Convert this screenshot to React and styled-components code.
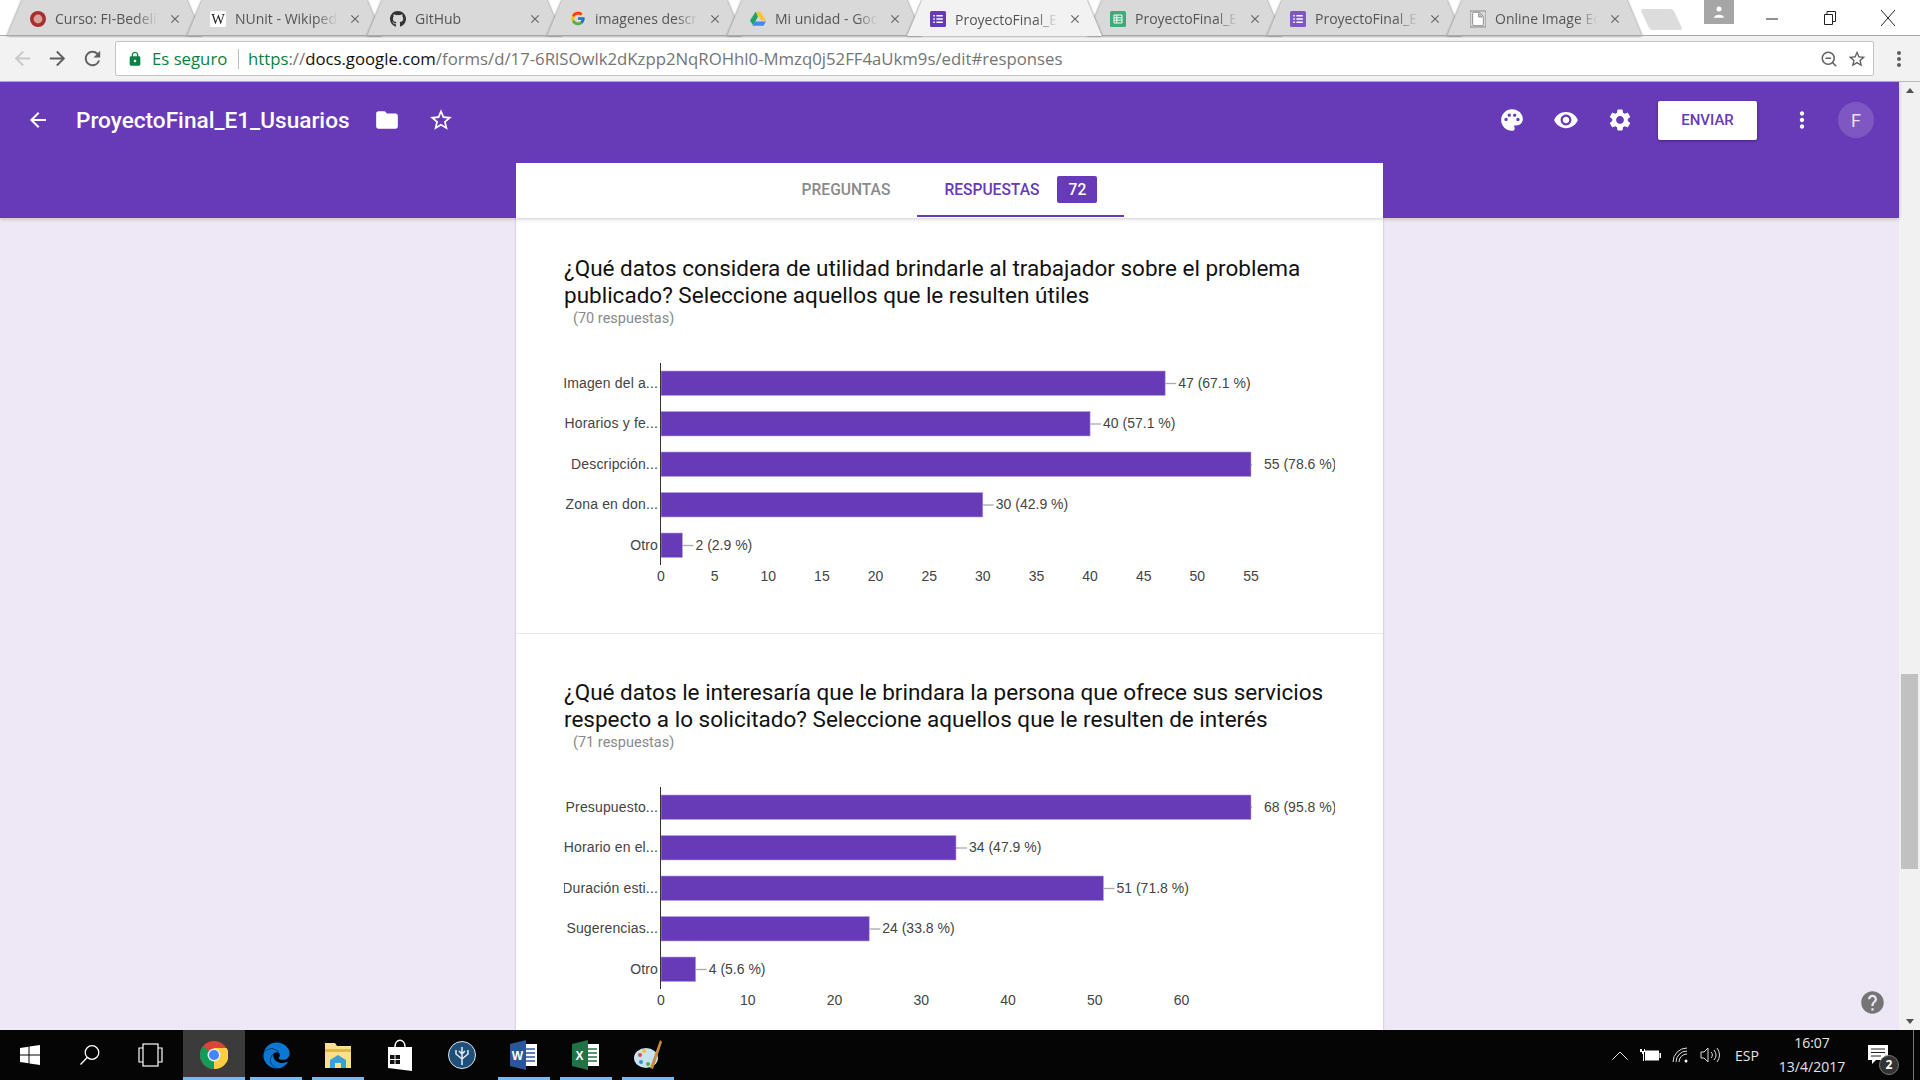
import React from 'react';
import styled, { createGlobalStyle } from 'styled-components';
import { FaGithub, FaEdge } from 'react-icons/fa';
import { FcGoogle } from 'react-icons/fc';
import {
  MdArrowBack, MdArrowForward, MdRefresh, MdLock, MdFolder, MdStarBorder, MdPalette,
  MdRemoveRedEye, MdSettings, MdMoreVert, MdHelp, MdClose, MdInsertDriveFile,
} from 'react-icons/md';
import { ZoomOut } from 'lucide-react';

const PURPLE = '#673ab7';

const GlobalStyle = createGlobalStyle`
  html, body { margin: 0; padding: 0; height: 100%; overflow: hidden; background: #fff; }
  #root { height: 100%; }
  * { box-sizing: border-box; }
`;

const Screen = styled.div`
  width: 1920px;
  height: 1080px;
  display: flex;
  flex-direction: column;
  overflow: hidden;
  font-family: Roboto, sans-serif;
`;

/* chrome tabs */
const TabStrip = styled.div`
  height: 35px;
  flex: none;
  display: flex;
  padding-left: 7px;
  background: #fff;
`;

const TabShadow = styled.div`
  width: 195px;
  height: 36px;
  flex: none;
  margin-right: -15px;
  position: relative;
  z-index: ${props => (props.$active ? 2 : 1)};
  filter: drop-shadow(0 0 0.8px #666);
`;

const TabBody = styled.div`
  height: 36px;
  display: flex;
  align-items: center;
  padding: 2px 20px 0 23px;
  clip-path: polygon(0 100%, 15px 0, 180px 0, 100% 100%);
  background: ${props => (props.$active ? '#f2f2f2' : '#d9d9d9')};
  border-bottom: ${props => (props.$active ? 'none' : '1px solid #a9a9a9')};
`;

const TabIcon = styled.span`
  width: 16px;
  height: 16px;
  flex: none;
  display: flex;
  align-items: center;
  justify-content: center;
`;

const TabTitle = styled.span`
  flex: 1;
  min-width: 0;
  margin-left: 9px;
  font: 14px "Open Sans", sans-serif;
  color: #555;
  white-space: nowrap;
  overflow: hidden;
  -webkit-mask-image: linear-gradient(to right, #000 76%, transparent 96%);
  mask-image: linear-gradient(to right, #000 76%, transparent 96%);
`;

const TabClose = styled(MdClose)`
  flex: none;
  width: 14px;
  height: 14px;
  margin-left: 6px;
  color: #666;
`;

const NewTab = styled.div`
  width: 33px;
  height: 21px;
  margin: 9px 0 0 18px;
  flex: none;
  background: #dcdcdc;
  border-radius: 3px;
  transform: skewX(25deg);
`;

const Profile = styled.div`
  width: 30px;
  height: 24px;
  margin-left: 26px;
  flex: none;
  background: #a6a6a6;
  display: flex;
  align-items: center;
  justify-content: center;
`;

const WindowControls = styled.div`
  margin-left: auto;
  display: flex;
  padding-right: 3px;
`;

const WindowButton = styled.div`
  width: 58px;
  height: 35px;
  display: flex;
  align-items: center;
  justify-content: center;
`;

/* url bar */
const Toolbar = styled.div`
  height: 47px;
  flex: none;
  display: flex;
  align-items: center;
  padding-left: 5px;
  background: #f2f2f2;
  border-top: 1px solid #a9a9a9;
  border-bottom: 1px solid #b8b8b8;
`;

const NavButton = styled.div`
  width: 35px;
  display: flex;
  justify-content: center;
  color: ${props => (props.$off ? '#c9c9c9' : '#5f5f5f')};
  font-size: 23px;
`;

const Omnibox = styled.div`
  width: 1759px;
  height: 35px;
  margin-left: 5px;
  display: flex;
  align-items: center;
  padding: 0 6px 0 11px;
  background: #fff;
  border: 1px solid #c4c4c4;
  border-radius: 2px;
  font: 16.75px "Open Sans", sans-serif;
  white-space: nowrap;
`;

const Secure = styled.span`
  margin-left: 9px;
  color: #0b8043;
  width: 74px;
`;

const Divider = styled.span`
  width: 1px;
  height: 20px;
  margin: 0 9px 0 12px;
  background: #bdbdbd;
`;

const UrlPart = styled.span`
  color: ${props => props.$color};
`;

const OmniIcons = styled.div`
  margin-left: auto;
  display: flex;
  align-items: center;
  gap: 9px;
  color: #5f5f5f;
`;

const MenuDots = styled.div`
  margin-left: 13px;
  display: flex;
  color: #5f5f5f;
  font-size: 24px;
`;

/* page */
const Main = styled.div`
  flex: 1;
  min-height: 0;
  display: flex;
`;

const Page = styled.div`
  flex: 1;
  min-width: 0;
  display: flex;
  flex-direction: column;
  position: relative;
  background: #ede7f6;
`;

const Header = styled.header`
  height: 136px;
  flex: none;
  background: ${PURPLE};
  position: relative;
  z-index: 2;
  box-shadow: 0 1px 4px rgba(0, 0, 0, 0.2);
`;

const HeaderRow = styled.div`
  height: 76px;
  margin-bottom: 5px;
  display: flex;
  align-items: center;
  padding-left: 26px;
  color: #fff;
`;

const HeaderTitle = styled.h1`
  margin: 0 10px 0 26px;
  font: 500 22.6px Roboto, sans-serif;
`;

const HeaderIcon = styled.div`
  width: 54px;
  display: flex;
  justify-content: center;
  font-size: 26px;
`;

const HeaderRight = styled.div`
  margin-left: auto;
  display: flex;
  align-items: center;
  padding-right: 25px;
`;

const SendButton = styled.div`
  width: 99px;
  height: 39px;
  margin: 0 18px 0 11px;
  display: flex;
  align-items: center;
  justify-content: center;
  background: #fff;
  color: ${PURPLE};
  font-weight: 500;
  font-size: 15px;
  border-radius: 2px;
  box-shadow: 0 1px 3px rgba(0, 0, 0, 0.35);
`;

const Avatar = styled.div`
  width: 36px;
  height: 36px;
  margin-left: 9px;
  border-radius: 50%;
  background: #7e57c2;
  color: #e8e0f5;
  display: flex;
  align-items: center;
  justify-content: center;
  font-size: 18px;
`;

const TabsCard = styled.div`
  width: 867px;
  height: 55px;
  margin: 0 auto;
  background: #fff;
  display: flex;
  justify-content: center;
`;

const FormTab = styled.div`
  height: 54px;
  display: flex;
  align-items: center;
  padding: 1px 27px 0;
  font-size: 15.6px;
  font-weight: 500;
  color: ${props => (props.$active ? PURPLE : '#8a8a8a')};
  border-bottom: 2px solid ${props => (props.$active ? PURPLE : 'transparent')};
`;

const CountBadge = styled.span`
  width: 40px;
  height: 27px;
  margin-left: 18px;
  display: flex;
  align-items: center;
  justify-content: center;
  background: ${PURPLE};
  color: #fff;
  border-radius: 2px;
`;

const Body = styled.div`
  flex: 1;
  min-height: 0;
  overflow: hidden;
`;

const Card = styled.div`
  width: 867px;
  margin: 0 auto;
  min-height: 100%;
  background: #fff;
  box-shadow: 0 0 2px rgba(0, 0, 0, 0.25);
`;

const Section = styled.section`
  padding: ${props => props.$top}px 48px 43px;
  border-bottom: 1px solid #e8e8e8;
`;

const Question = styled.h2`
  margin: 0;
  font: 400 22.5px/27px Roboto, sans-serif;
  color: #111;
`;

const AnswerCount = styled.div`
  margin: 2px 0 13px 9px;
  font-size: 14.5px;
  line-height: 16px;
  color: #8a8a8a;
`;

const ChartSvg = styled.svg`
  display: block;
  font-family: "Liberation Sans", Arial, sans-serif;
  font-size: 14px;
  fill: #444;
`;

const BarLabel = styled.text`
  letter-spacing: 0.15px;
  text-anchor: end;
`;

const HelpButton = styled(MdHelp)`
  position: absolute;
  right: 13px;
  bottom: 14px;
  width: 27px;
  height: 27px;
  color: #757575;
`;

const Scrollbar = styled.div`
  width: 21px;
  flex: none;
  display: flex;
  flex-direction: column;
  background: #f1f1f1;
`;

const ScrollArrow = styled.div`
  height: 17px;
  flex: none;
  display: flex;
  align-items: center;
  justify-content: center;
  &::before {
    content: '';
    border-left: 4px solid transparent;
    border-right: 4px solid transparent;
    border-${props => (props.$down ? 'top' : 'bottom')}: 5px solid #505050;
  }
`;

const ScrollTrack = styled.div`
  flex: 1;
  padding: 575px 2px 0 2px;
`;

const ScrollThumb = styled.div`
  height: 195px;
  background: #c1c1c1;
`;

/* taskbar */
const Taskbar = styled.div`
  height: 50px;
  flex: none;
  display: flex;
  align-items: stretch;
  background: #050506;
  color: #e4e4e4;
`;

const SystemButton = styled.div`
  width: 60px;
  display: flex;
  align-items: center;
  justify-content: center;
`;

const TaskGroup = styled.div`
  display: flex;
  margin-left: 3px;
`;

const TaskButton = styled.div`
  width: 62px;
  display: flex;
  align-items: center;
  justify-content: center;
  position: relative;
  background: ${props => (props.$active ? '#3b3b3b' : 'transparent')};
  &::after {
    content: '';
    display: ${props => (props.$open ? 'block' : 'none')};
    position: absolute;
    bottom: 0;
    height: 3px;
    left: ${props => (props.$active ? 0 : 5)}px;
    right: ${props => (props.$active ? 0 : 5)}px;
    background: #76b9ed;
  }
`;

const Tray = styled.div`
  margin-left: auto;
  display: flex;
  align-items: center;
  padding-right: 6px;
  font: 14px "Open Sans", sans-serif;
`;

const TrayIcon = styled.div`
  width: 30px;
  display: flex;
  justify-content: center;
`;

const TrayLang = styled.div`
  width: 44px;
  text-align: center;
`;

const Clock = styled.div`
  width: 80px;
  margin-left: 3px;
  text-align: center;
  line-height: 24px;
`;

const Notify = styled.div`
  width: 55px;
  margin-left: 7px;
  padding-left: 9px;
  height: 100%;
  display: flex;
  align-items: center;
  position: relative;
  border-right: 1px solid #777;
`;

const NotifyBadge = styled.span`
  position: absolute;
  left: 20px;
  top: 25px;
  width: 20px;
  height: 20px;
  border-radius: 50%;
  background: #333;
  border: 1px solid #777;
  color: #fff;
  font: 700 12px/18px "Open Sans", sans-serif;
  text-align: center;
`;

/* drawn favicons and app icons */
const CursoIcon = () => (
  <svg width="20" height="20" viewBox="0 0 20 20">
    <circle cx="10" cy="10" r="10" fill="#a62f2f" />
    <circle cx="10" cy="10" r="5.5" fill="#dca09a" />
  </svg>
);

const WikiIcon = () => (
  <svg width="20" height="20" viewBox="0 0 20 20">
    <rect width="20" height="20" rx="2" fill="#fff" />
    <text x="10" y="16" textAnchor="middle" fontFamily="Liberation Serif, serif" fontSize="18" fill="#222">W</text>
  </svg>
);

const DriveIcon = () => (
  <svg width="20" height="18" viewBox="0 0 20 18">
    <path d="M7 0h6l7 11h-6z" fill="#f7c531" />
    <path d="M7 0l3 6-6 11-4-6z" fill="#1fa463" />
    <path d="M6 12h14l-3 5.5H3z" fill="#4587f4" />
  </svg>
);

const FormsIcon = ({ color = PURPLE }) => (
  <svg width="20" height="20" viewBox="0 0 20 20">
    <rect width="20" height="20" rx="2" fill={color} />
    <path d="M4 5h2v2H4zM8 5h8v2H8zM4 9h2v2H4zM8 9h8v2H8zM4 13h2v2H4zM8 13h8v2H8z" fill="#fff" />
  </svg>
);

const SheetsIcon = () => (
  <svg width="20" height="20" viewBox="0 0 20 20">
    <rect width="20" height="20" rx="2" fill="#3dab7a" />
    <path d="M5 5h10v10H5zM5 8.5h10M5 11.5h10M8.500 5v10" fill="none" stroke="#fff" strokeWidth="1.2" />
  </svg>
);

const WindowsLogo = () => (
  <svg width="20" height="20" viewBox="0 0 20 20" fill="#fff">
    <path d="M0 3l8.5-1.2v7.8H0zM9.500 1.600L20 0v9.600H9.500zM0 10.600h8.500v7.700L0 17.100zM9.500 10.600H20V20l-10.500-1.500z" />
  </svg>
);

const SearchGlyph = () => (
  <svg width="22" height="22" viewBox="0 0 22 22" fill="none" stroke="#fff" strokeWidth="1.3">
    <circle cx="13" cy="8.5" r="6.8" />
    <path d="M8.2 13.5L1.5 20.5" />
  </svg>
);

const TaskViewGlyph = () => (
  <svg width="25" height="24" viewBox="0 0 25 24" fill="none" stroke="#fff" strokeWidth="1.2">
    <rect x="5" y="1" width="15" height="22" />
    <path d="M5 5H1v14h4M20 5h4v14h-4" />
  </svg>
);

const ChromeLogo = () => (
  <svg width="28" height="28" viewBox="0 0 28 28">
    <circle cx="14" cy="14" r="14" fill="#db4437" />
    <path d="M14 14L2 21a14 14 0 0 0 12 7c1 0 2 0 3-.3z" fill="#0f9d58" />
    <path d="M14 7h12.6A14 14 0 0 1 14 28z" fill="#ffcd40" />
    <path d="M14 14L2 21A14 14 0 0 1 3 5.2z" fill="#0f9d58" />
    <circle cx="14" cy="14" r="6.5" fill="#e8eef7" />
    <circle cx="14" cy="14" r="5" fill="#4285f4" />
  </svg>
);

const FolderGlyph = () => (
  <svg width="28" height="28" viewBox="0 0 28 28">
    <path d="M1 2h10l2 3h14v22H1z" fill="#fbe08c" />
    <path d="M1 8h26v3H1z" fill="#e2b74a" />
    <path d="M6 27v-8l8-5 8 5v8h-5v-5h-6v5z" fill="#3aa0da" />
  </svg>
);

const StoreGlyph = () => (
  <svg width="26" height="32" viewBox="0 0 26 32">
    <path d="M8 8c0-9 10-9 10 0" fill="none" stroke="#fff" strokeWidth="1.5" />
    <path d="M1 8h24v24L1 29z" fill="#fff" />
    <path d="M3 16h4.500v4H3zM8.500 16H13v4H8.500zM3 21h4.500v4H3zM8.500 21H13v4H8.500z" fill="#111" />
  </svg>
);

const TreeGlyph = () => (
  <svg width="28" height="28" viewBox="0 0 28 28">
    <circle cx="14" cy="14" r="13.5" fill="#1f4e79" stroke="#dce6f0" strokeWidth="1" />
    <path d="M14 24V6M14 18l-6-5V9M14 18l6-5V9M14 13l-3-3M14 13l3-3" fill="none" stroke="#e4edf6" strokeWidth="1.5" />
  </svg>
);

const OfficeGlyph = ({ letter, dark }) => (
  <svg width="28" height="30" viewBox="0 0 28 30">
    <rect x="12" y="4" width="15" height="22" fill="#fff" />
    <path d="M14 9h11M14 13h11M14 17h11M14 21h11" stroke={dark} strokeWidth="1.5" />
    <path d="M0 4l16-4v30L0 26z" fill={dark} />
    <text x="7.5" y="20" textAnchor="middle" fontFamily="Liberation Sans, sans-serif" fontSize="12" fontWeight="700" fill="#fff">{letter}</text>
  </svg>
);

const PaintGlyph = () => (
  <svg width="30" height="32" viewBox="0 0 30 32">
    <ellipse cx="13" cy="19" rx="12" ry="10" fill="#c9e2ef" />
    <circle cx="7" cy="16" r="2" fill="#e04b3a" />
    <circle cx="11" cy="12" r="2" fill="#f2c230" />
    <circle cx="8" cy="23" r="2" fill="#3a8fd0" />
    <circle cx="15" cy="25" r="2" fill="#58a84a" />
    <path d="M27 1l2 2-9 27-3-1z" fill="#c98a3d" />
  </svg>
);

const BatteryGlyph = () => (
  <svg width="21" height="14" viewBox="0 0 21 14" fill="#fff">
    <path d="M0 1h2v2h2V1h1v3H4v2H2V4H0zM3 6h1v7H3z" />
    <rect x="5" y="2.5" width="14" height="10" />
    <rect x="19.5" y="5" width="1.5" height="5" />
  </svg>
);

const WifiGlyph = () => (
  <svg width="17" height="16" viewBox="0 0 17 16" fill="none" stroke="#ddd" strokeWidth="1">
    <path d="M1 15A14 14 0 0 1 15 1M4 15A11 11 0 0 1 15 4M7 15a8 8 0 0 1 8-8" />
    <circle cx="14" cy="14" r="1.5" fill="#fff" stroke="none" />
  </svg>
);

const VolumeGlyph = () => (
  <svg width="21" height="16" viewBox="0 0 21 16" fill="none" stroke="#ddd" strokeWidth="1">
    <path d="M1 5h3l4-4v14l-4-4H1zM11 5a4 4 0 0 1 0 6M14 3a8 8 0 0 1 0 10M17 1a11 11 0 0 1 0 14" />
  </svg>
);

/* data */
const tabs = [
  { title: 'Curso: FI-Bedelías', icon: <CursoIcon /> },
  { title: 'NUnit - Wikipedia', icon: <WikiIcon /> },
  { title: 'GitHub', icon: <FaGithub size={20} color="#333" /> },
  { title: 'imagenes descriptivas', icon: <FcGoogle size={19} /> },
  { title: 'Mi unidad - Google', icon: <DriveIcon /> },
  { title: 'ProyectoFinal_E1_Usuarios', icon: <FormsIcon />, active: true },
  { title: 'ProyectoFinal_E1_Usuarios', icon: <SheetsIcon /> },
  { title: 'ProyectoFinal_E1_Usuarios', icon: <FormsIcon color="#7e57c2" /> },
  { title: 'Online Image Editor', icon: <MdInsertDriveFile size={20} color="#fff" style={{ stroke: '#777', strokeWidth: 1.2 }} /> },
];

const chartOne = {
  unit: 590 / 55,
  ticks: [0, 5, 10, 15, 20, 25, 30, 35, 40, 45, 50, 55],
  rows: [
    { label: 'Imagen del a...', value: 47, text: '47 (67.1 %)' },
    { label: 'Horarios y fe...', value: 40, text: '40 (57.1 %)' },
    { label: 'Descripción...', value: 55, text: '55 (78.6 %)' },
    { label: 'Zona en don...', value: 30, text: '30 (42.9 %)' },
    { label: 'Otro', value: 2, text: '2 (2.9 %)' },
  ],
};

const chartTwo = {
  unit: 590 / 68,
  ticks: [0, 10, 20, 30, 40, 50, 60],
  rows: [
    { label: 'Presupuesto...', value: 68, text: '68 (95.8 %)' },
    { label: 'Horario en el...', value: 34, text: '34 (47.9 %)' },
    { label: 'Duración esti...', value: 51, text: '51 (71.8 %)' },
    { label: 'Sugerencias...', value: 24, text: '24 (33.8 %)' },
    { label: 'Otro', value: 4, text: '4 (5.6 %)' },
  ],
};

const AXIS_X = 97;

const BarChart = ({ unit, ticks, rows }) => {
  const longest = Math.max(...rows.map(row => row.value));
  return (
    <ChartSvg width="771" height="250" viewBox="0 0 771 250">
      {rows.map((row, i) => {
        const y = 31 + i * 40.5;
        const end = AXIS_X + row.value * unit;
        return (
          <g key={row.label}>
            <BarLabel x={AXIS_X - 3} y={y + 16.5}>{row.label}</BarLabel>
            <rect x={AXIS_X} y={y} width={row.value * unit} height={24.5} fill={PURPLE} stroke="#b9a3e0" strokeWidth="0.6" />
            <path d={`M${end} ${y + 12.5}h${row.value === longest ? 1 : 11}`} stroke="#aaa" strokeWidth="1.3" />
            <text x={end + 13} y={y + 16.5}>{row.text}</text>
          </g>
        );
      })}
      <path d={`M${AXIS_X - 0.5} 23V225`} stroke="#333" strokeWidth="1" />
      {ticks.map(tick => (
        <text key={tick} x={AXIS_X + tick * unit} y={241} textAnchor="middle">{tick}</text>
      ))}
    </ChartSvg>
  );
};

const App = () => (
  <Screen>
    <GlobalStyle />
    <TabStrip>
      {tabs.map((tab, i) => (
        <TabShadow key={i} $active={tab.active}>
          <TabBody $active={tab.active}>
            <TabIcon>{tab.icon}</TabIcon>
            <TabTitle>{tab.title}</TabTitle>
            <TabClose />
          </TabBody>
        </TabShadow>
      ))}
      <NewTab />
      <Profile>
        <svg width="10" height="12" viewBox="0 0 12 14" fill="#fff">
          <circle cx="6" cy="3.5" r="3" />
          <path d="M0 14c0-5 12-5 12 0z" />
        </svg>
      </Profile>
      <WindowControls>
        <WindowButton>
          <svg width="12" height="12" viewBox="0 0 12 12"><path d="M0 7h12" stroke="#222" /></svg>
        </WindowButton>
        <WindowButton>
          <svg width="12" height="14" viewBox="0 0 12 14" fill="none" stroke="#222">
            <path d="M.5 3.5h8v10h-8zM3 3.5V.5h8.500v10H8.500" />
          </svg>
        </WindowButton>
        <WindowButton>
          <svg width="14" height="16" viewBox="0 0 14 16"><path d="M0 0l14 16M14 0L0 16" stroke="#222" /></svg>
        </WindowButton>
      </WindowControls>
    </TabStrip>

    <Toolbar>
      <NavButton $off><MdArrowBack /></NavButton>
      <NavButton><MdArrowForward /></NavButton>
      <NavButton><MdRefresh /></NavButton>
      <Omnibox>
        <MdLock size={16} color="#0b8043" />
        <Secure>Es seguro</Secure>
        <Divider />
        <UrlPart $color="#0b8043">https</UrlPart>
        <UrlPart $color="#757575">://</UrlPart>
        <UrlPart $color="#111">docs.google.com</UrlPart>
        <UrlPart $color="#757575">/forms/d/17-6RlSOwlk2dKzpp2NqROHhl0-Mmzq0j52FF4aUkm9s/edit#responses</UrlPart>
        <OmniIcons>
          <ZoomOut size={18} />
          <MdStarBorder size={20} />
        </OmniIcons>
      </Omnibox>
      <MenuDots><MdMoreVert /></MenuDots>
    </Toolbar>

    <Main>
      <Page>
        <Header>
          <HeaderRow>
            <MdArrowBack size={24} />
            <HeaderTitle>ProyectoFinal_E1_Usuarios</HeaderTitle>
            <HeaderIcon><MdFolder /></HeaderIcon>
            <HeaderIcon><MdStarBorder /></HeaderIcon>
            <HeaderRight>
              <HeaderIcon><MdPalette /></HeaderIcon>
              <HeaderIcon><MdRemoveRedEye /></HeaderIcon>
              <HeaderIcon><MdSettings /></HeaderIcon>
              <SendButton>ENVIAR</SendButton>
              <HeaderIcon><MdMoreVert /></HeaderIcon>
              <Avatar>F</Avatar>
            </HeaderRight>
          </HeaderRow>
          <TabsCard>
            <FormTab>PREGUNTAS</FormTab>
            <FormTab $active>RESPUESTAS<CountBadge>72</CountBadge></FormTab>
          </TabsCard>
        </Header>
        <Body>
          <Card>
            <Section $top={37}>
              <Question>¿Qué datos considera de utilidad brindarle al trabajador sobre el problema publicado? Seleccione aquellos que le resulten útiles</Question>
              <AnswerCount>(70 respuestas)</AnswerCount>
              <BarChart {...chartOne} />
            </Section>
            <Section $top={45}>
              <Question>¿Qué datos le interesaría que le brindara la persona que ofrece sus servicios respecto a lo solicitado? Seleccione aquellos que le resulten de interés</Question>
              <AnswerCount>(71 respuestas)</AnswerCount>
              <BarChart {...chartTwo} />
            </Section>
          </Card>
        </Body>
        <HelpButton />
      </Page>
      <Scrollbar>
        <ScrollArrow />
        <ScrollTrack><ScrollThumb /></ScrollTrack>
        <ScrollArrow $down />
      </Scrollbar>
    </Main>

    <Taskbar>
      <SystemButton><WindowsLogo /></SystemButton>
      <SystemButton><SearchGlyph /></SystemButton>
      <SystemButton><TaskViewGlyph /></SystemButton>
      <TaskGroup>
        <TaskButton $active $open><ChromeLogo /></TaskButton>
        <TaskButton $open><FaEdge size={27} color="#0a78d4" /></TaskButton>
        <TaskButton $open><FolderGlyph /></TaskButton>
        <TaskButton><StoreGlyph /></TaskButton>
        <TaskButton><TreeGlyph /></TaskButton>
        <TaskButton $open><OfficeGlyph letter="W" dark="#2b579a" /></TaskButton>
        <TaskButton $open><OfficeGlyph letter="X" dark="#217346" /></TaskButton>
        <TaskButton $open><PaintGlyph /></TaskButton>
      </TaskGroup>
      <Tray>
        <TrayIcon>
          <svg width="16" height="9" viewBox="0 0 16 9" fill="none" stroke="#ddd"><path d="M.5 8.5L8 1l7.500 7.500" /></svg>
        </TrayIcon>
        <TrayIcon><BatteryGlyph /></TrayIcon>
        <TrayIcon><WifiGlyph /></TrayIcon>
        <TrayIcon><VolumeGlyph /></TrayIcon>
        <TrayLang>ESP</TrayLang>
        <Clock>16:07<br />13/4/2017</Clock>
        <Notify>
          <svg width="20" height="20" viewBox="0 0 20 20">
            <path d="M0 0h20v15H8l-4 4v-4H0z" fill="#fff" />
            <path d="M3 4h14M3 7.5h14M3 11h10" stroke="#222" />
          </svg>
          <NotifyBadge>2</NotifyBadge>
        </Notify>
      </Tray>
    </Taskbar>
  </Screen>
);

export default App;
